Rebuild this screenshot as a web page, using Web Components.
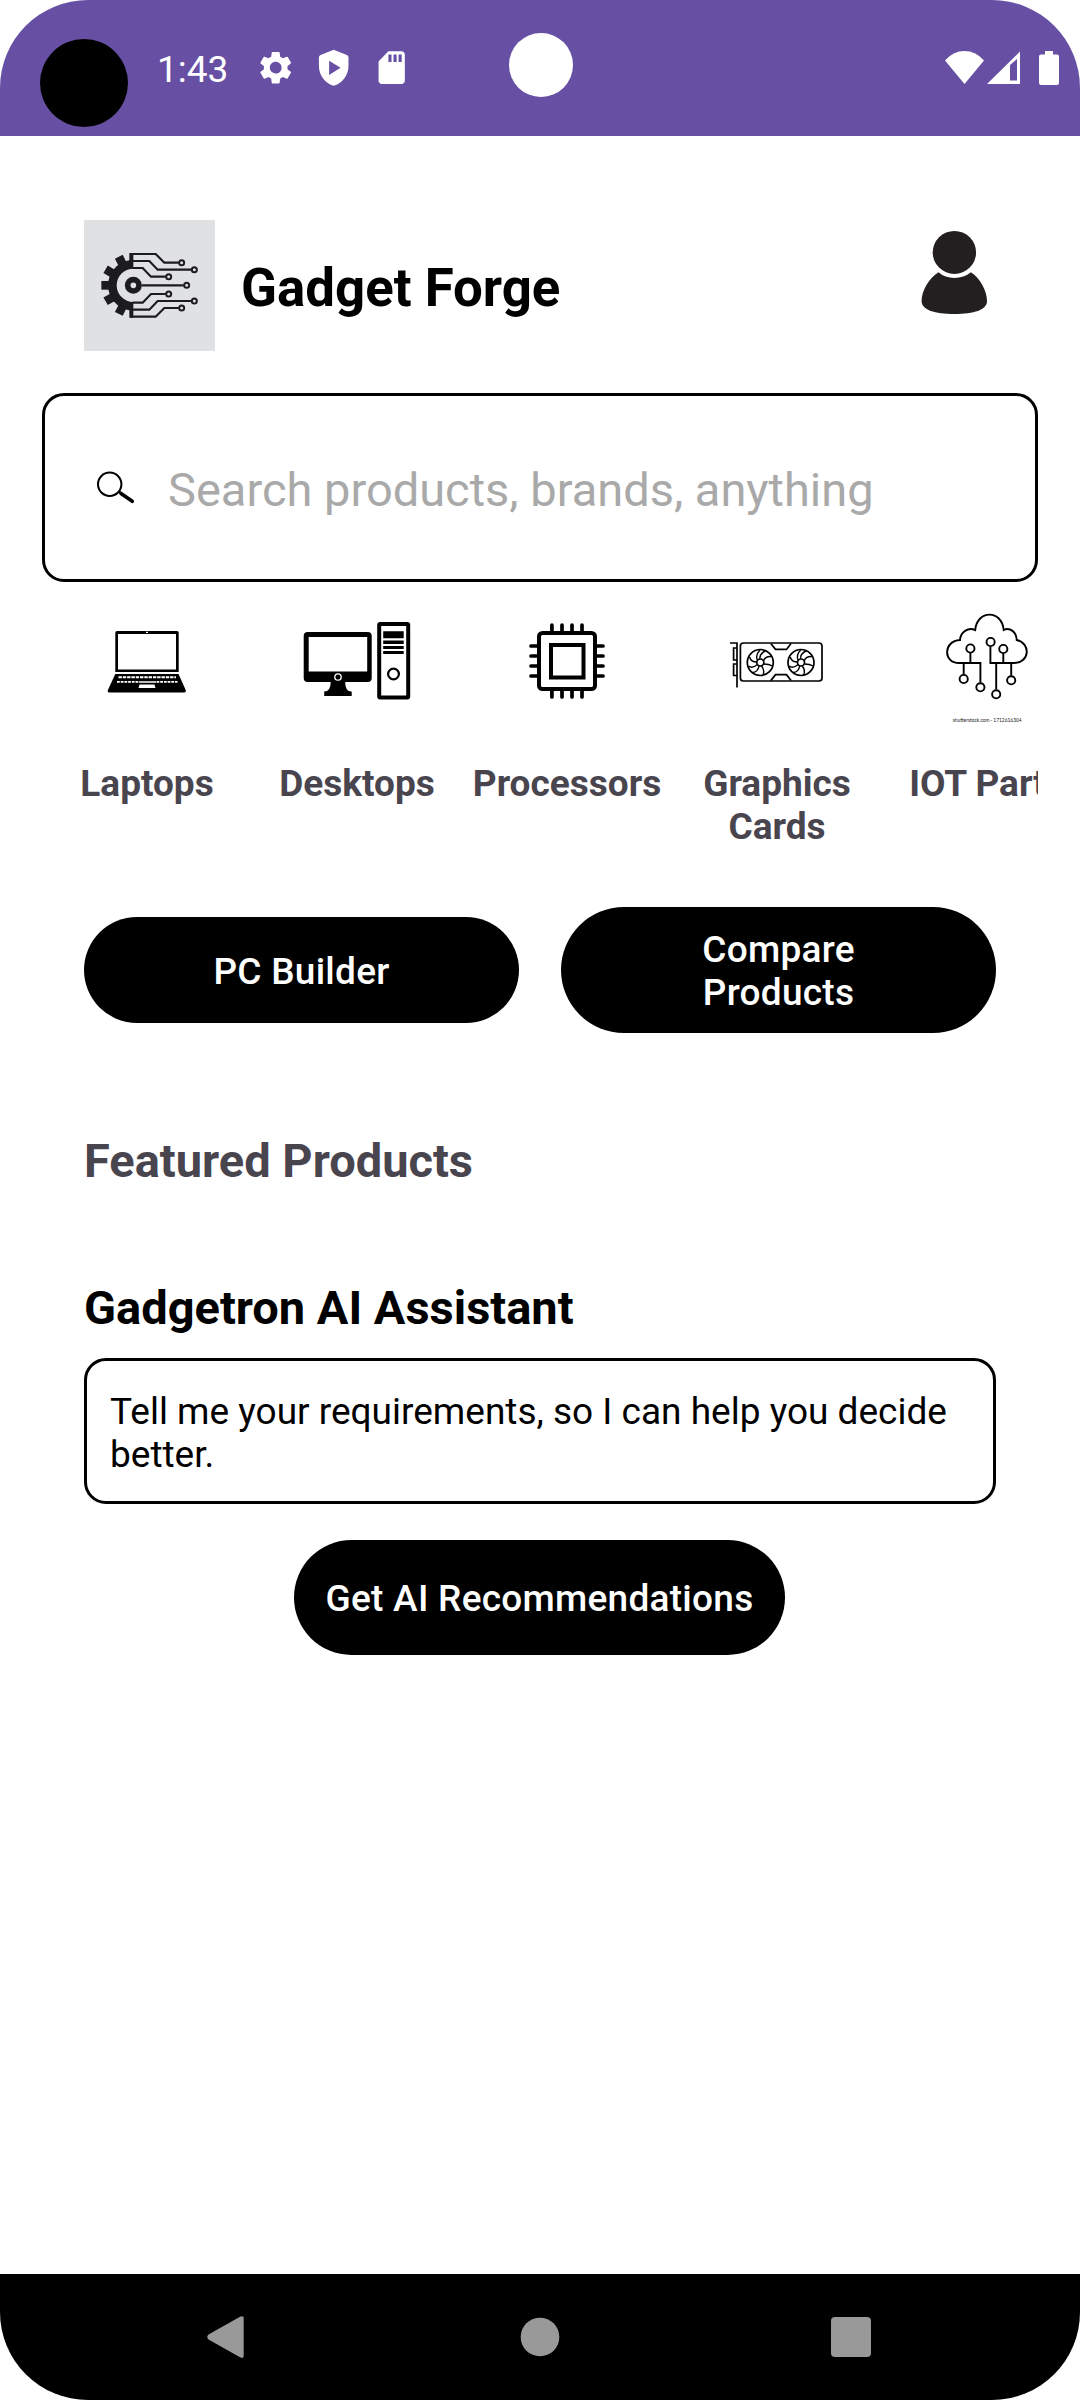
<!DOCTYPE html>
<html lang="en">
<head>
<meta charset="utf-8">
<title>Gadget Forge</title>
<style>
html,body{margin:0;padding:0;background:#fff}
body{width:1080px;height:2400px;overflow:hidden;font-family:Roboto,"Liberation Sans",sans-serif;color:#000}
</style>
</head>
<body>
<gf-app></gf-app>
<script>
const define = (name, css, html) => customElements.define(name, class extends HTMLElement {
  constructor() {
    super();
    this.attachShadow({ mode: 'open' }).innerHTML = `<style>*{box-sizing:border-box}svg{display:block}${css}</style>${html}`;
  }
});

define('gf-status-bar', `
:host{display:flex;align-items:flex-start;position:relative;height:136px;background:#6750a4;color:#fff;padding-left:40px;box-sizing:border-box}
.dot{width:88px;height:88px;border-radius:50%;background:#000;margin-top:39px}
.time{width:99px;margin:48px 0 0 29px;font-size:37px;line-height:43px}
.icons{display:flex;gap:18.6px;margin-top:48.3px}
.right{margin:48px 17px 0 auto}
.cam{position:absolute;left:508.500px;top:33px;width:64px;height:64px;border-radius:50%;background:#fff}
`, `
<div class="dot"></div><div class="time">1:43</div>
<div class="icons">
<svg width="39.4" height="39.4" viewBox="0 0 24 24" fill="#fff"><path d="M19.14 12.94c.04-.3.06-.61.06-.94 0-.32-.02-.64-.07-.94l2.03-1.58a.49.49 0 0 0 .12-.61l-1.92-3.32a.488.488 0 0 0-.59-.22l-2.39.96c-.5-.38-1.03-.7-1.62-.94l-.36-2.54a.484.484 0 0 0-.48-.41h-3.84c-.24 0-.43.17-.47.41l-.36 2.54c-.59.24-1.13.57-1.62.94l-2.39-.96c-.22-.08-.47 0-.59.22L2.74 8.87c-.12.21-.08.47.12.61l2.03 1.58c-.05.3-.09.63-.09.94s.02.64.07.94l-2.03 1.58a.49.49 0 0 0-.12.61l1.92 3.32c.12.22.37.29.59.22l2.39-.96c.5.38 1.03.7 1.62.94l.36 2.54c.05.24.24.41.48.41h3.84c.24 0 .44-.17.47-.41l.36-2.54c.59-.24 1.13-.56 1.62-.94l2.39.96c.22.08.47 0 .59-.22l1.92-3.32c.12-.22.07-.47-.12-.61l-2.01-1.58zM12 15.6A3.61 3.61 0 0 1 8.400 12c0-1.980 1.620-3.600 3.600-3.600s3.600 1.620 3.600 3.600-1.620 3.600-3.600 3.600z"/></svg>
<svg width="39.4" height="39.4" viewBox="0 0 24 24" fill="#fff" fill-rule="evenodd"><path d="M12 1 4 4.200Q3 4.600 3 5.600V11c0 5.550 3.840 10.740 9 12 5.160-1.260 9-6.450 9-12V5.600Q21 4.600 20 4.200zM9.200 7.700v8.700l7-4.350z"/></svg>
<svg width="39.4" height="39.4" viewBox="0 0 24 24" fill="#fff" fill-rule="evenodd"><path d="M18 2h-8L4 8.200V20c0 1.100.9 2 2 2h12c1.100 0 2-.9 2-2V4c0-1.100-.9-2-2-2zM10 4h1.900v4.500H10zM13.100 4H15v4.500h-1.900zM16.200 4h1.900v4.500h-1.900z"/></svg>
</div>
<svg class="right" width="120" height="40" viewBox="943 48 120 40" fill="#fff"><path d="M945 60.500Q953 51 964.500 51T984 60.500L964.500 84z"/><path fill-rule="evenodd" d="M987 84 1020 51.500V84zM1010 65v15.500h7V59z"/><path d="M1045 51h8v3.500h4q2 0 2 2V83q0 2-2 2h-16q-2 0-2-2V56.500q0-2 2-2h4z"/></svg>
<div class="cam"></div>`);

define('gf-header', `
:host{display:flex;align-items:flex-start;margin-top:84px;padding:0 84px;height:173px;box-sizing:border-box}
h1{font-size:52.8px;line-height:62px;font-weight:700;margin:37px 0 0 26px;white-space:nowrap}
.user{margin:10px 8px 0 auto}
`, `
<svg width="131" height="131" viewBox="42 30 393 393">
<rect x="42" y="30" width="393" height="393" fill="#e0e1e3"/>
<g fill="#1c1b1d"><path fill-rule="evenodd" d="M190 129V176A50 50 0 0 0 190 276V323H178V301A76 76 0 0 1 178 151V129z"/>
<path d="M94 213h26v26H94z"/><path d="M94 213h26v26H94z" transform="rotate(30 190 226)"/><path d="M94 213h26v26H94z" transform="rotate(-30 190 226)"/><path d="M94 213h26v26H94z" transform="rotate(63 190 226)"/><path d="M94 213h26v26H94z" transform="rotate(-63 190 226)"/></g>
<g fill="none" stroke="#1c1b1d" stroke-width="6.500"><circle cx="190" cy="226" r="17" stroke-width="17"/>
<path d="M180 132h77l26 26h43M188 153h50l25 26h101M188 174h30l25 26h44M215 226h126M188 278h30l25-26h44M188 299h50l25-26h101M180 320h77l26-26h43"/>
<g stroke-width="6"><circle cx="335" cy="158" r="7.500"/><circle cx="373" cy="179" r="7.500"/><circle cx="296" cy="200" r="7.500"/><circle cx="350" cy="226" r="7.500"/><circle cx="296" cy="252" r="7.500"/><circle cx="373" cy="273" r="7.500"/><circle cx="335" cy="294" r="7.500"/></g></g>
</svg>
<h1>Gadget Forge</h1>
<svg class="user" width="68" height="86" viewBox="920 230 68 86" fill="#231f20"><ellipse cx="954.400" cy="252.400" rx="21.700" ry="21.500"/><path d="M938.500 272.300Q945 278 954.400 278T971 272.300C980 278 987 291 987 301 987 310 974 314 954.400 314S921.600 310 921.600 301C921.600 291 929 278 938.500 272.300z"/></svg>`);

define('gf-search', `
:host{display:flex;align-items:center;margin:0 42px;height:189px;border:3px solid #000;border-radius:22px;box-sizing:border-box;padding-left:50px}
span{font-size:47px;line-height:56px;color:#a9a9a9;margin:5px 0 0 32px;white-space:nowrap}
`, `<svg width="41" height="35" viewBox="95 470 41 35" fill="none" stroke="#000"><circle cx="109.700" cy="484.300" r="11.700" stroke-width="2"/><path d="M118.500 491.500 123 494.500" stroke-width="2.500"/><path d="M121 493.500 132.300 501.300" stroke-width="3.600" stroke-linecap="round"/></svg>
<span><slot></slot></span>`);

define('gf-category', `
:host{display:block;flex:0 0 210px;width:210px;text-align:center}
::slotted(svg){display:block;width:210px;height:150px}
.l{margin-top:12px;font-size:37px;line-height:43px;font-weight:700;color:#49454f;padding:0 8px}
`, `<slot name="icon"></slot><div class="l"><slot></slot></div>`);

define('gf-categories', `
:host{display:flex;margin:18px 42px 0;height:260px;overflow:hidden}
.n{white-space:nowrap}
`, `
<gf-category><svg slot="icon" viewBox="42 600 210 150"><g fill="#000"><path fill-rule="evenodd" d="M117 631h60q1.700 0 1.700 1.700V672H115.300v-39.300q0-1.700 1.700-1.700zM118 634v35.500h58V634z"/><path d="M115.300 674h63.200l7.200 16q.5 2.500-1.500 2.500h-75q-2 0-1.300-2.500z"/></g><g stroke="#fff" fill="none"><path stroke-width="2" stroke-dasharray="3.400 .9" d="M118.500 677.300h57.500"/><path stroke-width="1.800" stroke-dasharray="2.800 .9" d="M117 681.800h22M156.500 681.800h21"/><path stroke-width="1.500" d="M139 682h17"/></g><path fill="#fff" d="M139.500 684.500h15l1 3.500h-17zM146 631.800h2v1.300h-2z"/></svg>Laptops</gf-category>
<gf-category><svg slot="icon" viewBox="251.300 600 210 150"><path fill-rule="evenodd" d="M307 632h60q4 0 4 4v42q0 4-4 4h-22.500q0 10 6.500 9.500v4.500h-27.500v-4.500q6.500 0 6.500-9.500H307q-4 0-4-4v-42q0-4 4-4zM308 637v34.500h58.500V637z"/><circle cx="337.300" cy="677" r="3.200" stroke="#fff" stroke-width="1.300"/><rect x="378.500" y="624" width="29" height="73.500" rx="1" fill="none" stroke="#000" stroke-width="4"/><path d="M382.500 631.300H403v6.900h-20.500zM382.500 640.500H403v3.400h-20.500zM382.500 646H403v3h-20.500zM382.500 651H403v3h-20.500z"/><circle cx="392.800" cy="674" r="5.400" fill="none" stroke="#000" stroke-width="2.200"/></svg>Desktops</gf-category>
<gf-category class="n"><svg slot="icon" viewBox="462 600 210 150" fill="none" stroke="#000" stroke-width="3.700" stroke-linecap="round"><rect x="539" y="633" width="56" height="56" rx="3.500" stroke-width="4"/><rect x="551" y="645" width="32.500" height="32.500" stroke-width="4"/><path d="M551.900 625v6M562 625v6M572 625v6M582 625v6M551.900 691v6M562 691v6M572 691v6M582 691v6M531 646h6M531 656h6M531 666h6M531 676h6M597 646h6M597 656h6M597 666h6M597 676h6"/></svg>Processors</gf-category>
<gf-category><svg slot="icon" viewBox="672 600 210 150" fill="none" stroke="#000" stroke-width="1.700"><rect x="740.400" y="643" width="81.600" height="38" rx="3"/><path d="M730 643h7v44.500M737 648h-3.400v12H737M737 664h-3.400v11.500H737M770.800 643.500l4.700 5.900h11l4.500-5.900M770.800 680.600l4.700-5.900h11l4.500 5.900"/><g><circle cx="760.300" cy="662.500" r="13"/><circle cx="760.300" cy="662.500" r="3.500"/><g stroke-width="1.400"><path d="M757.500 660.500Q755 655 760 650M760 659Q759 654 766 650.500M763.500 661Q765 656 771.500 656.500M763.800 664Q769 664 772.500 666M761.500 666Q765 670 763 675M759 666Q758 672 752.500 672.500M757.500 664.500Q752 669 748.500 666M757 662Q751 662 749.500 657"/></g></g><g transform="translate(40.700 0)"><circle cx="760.300" cy="662.500" r="13"/><circle cx="760.300" cy="662.500" r="3.500"/><g stroke-width="1.400"><path d="M757.500 660.500Q755 655 760 650M760 659Q759 654 766 650.500M763.500 661Q765 656 771.500 656.500M763.800 664Q769 664 772.500 666M761.500 666Q765 670 763 675M759 666Q758 672 752.500 672.500M757.500 664.500Q752 669 748.500 666M757 662Q751 662 749.500 657"/></g></g></svg>Graphics Cards</gf-category>
<gf-category class="n"><svg slot="icon" viewBox="882 600 210 150" fill="none" stroke="#000" stroke-width="1.900"><path d="M980.400 682.500V663H959C943 663 943 641 960 640 960.500 632 968 627 975.200 630 977 609.500 1002 609.500 1003.700 630 1010 627 1016.500 632 1016.700 640 1031 643 1030 663 1014 663H990.400V646.500M970.400 653v10M1003.300 653.500V663M963.700 663v11.500M996.200 663v26.500M1011.200 663v12.500"/><circle cx="980.400" cy="687.300" r="4.100"/><circle cx="990.600" cy="642" r="4.100"/><circle cx="970.400" cy="648.500" r="4.100"/><circle cx="1003.300" cy="649" r="4.100"/><circle cx="963.700" cy="679" r="4.100"/><circle cx="996.200" cy="694.300" r="4.100"/><circle cx="1011.200" cy="680.300" r="4.100"/><text x="952.700" y="721.700" font-size="5.300" fill="#222" stroke="none" textLength="69" lengthAdjust="spacingAndGlyphs" font-family="Lato, sans-serif">shutterstock.com · 1712616304</text></svg>IOT Parts</gf-category>`);

define('gf-button', `
:host{display:flex;align-items:center;justify-content:center;background:#000;color:#fff;font-size:37px;line-height:43px;font-weight:500;letter-spacing:.26px;text-align:center;border-radius:63px;box-sizing:border-box}
span{margin-top:2px}
`, `<span><slot></slot></span>`);

define('gf-actions', `
:host{display:flex;align-items:center;gap:42px;margin:47px 84px 0;height:126px}
gf-button{flex:none;width:435px;height:106px;padding:0 63px}
.tall{height:126px;padding:0 120px}
`, `<gf-button>PC Builder</gf-button><gf-button class="tall">Compare Products</gf-button>`);

define('gf-assistant', `
:host{display:flex;flex-direction:column;padding:0 84px}
h2{margin:100px 0 0;font-size:47px;line-height:56px;font-weight:700;color:#49454f}
h2+h2{margin-top:91px;color:#000}
.box{margin-top:22px;height:146px;border:3px solid #000;border-radius:22px;padding:29px 20px 0 23px;font-size:37px;line-height:43px}
gf-button{margin:36px 0 0 210px;width:491px;height:115px;white-space:nowrap}
`, `<h2>Featured Products</h2><h2>Gadgetron AI Assistant</h2>
<div class="box">Tell me your requirements, so I can help you decide better.</div>
<gf-button>Get AI Recommendations</gf-button>`);

define('gf-nav-bar', `
:host{display:flex;justify-content:space-between;align-items:center;height:126px;background:#000;padding:0 207px;margin-top:auto;box-sizing:border-box}
`, `
<svg width="42" height="44" viewBox="207 2315 42 44" fill="#999"><path d="M208.500 2334.500 240 2316.800Q243.700 2315 243.700 2318V2356Q243.700 2359 240 2357.200L208.500 2339.500Q206 2337 208.500 2334.500z"/></svg>
<svg width="40" height="40" viewBox="0 0 40 40" fill="#999"><circle cx="20" cy="20" r="19.300"/></svg>
<svg width="42" height="40" viewBox="0 0 42 40" fill="#999"><rect x="0" width="40" height="40" rx="4"/></svg>`);

define('gf-app', `
:host{display:flex;flex-direction:column;width:1080px;height:2400px;border-radius:88px;overflow:hidden;background:#fff}
`, `<gf-status-bar></gf-status-bar><gf-header></gf-header>
<gf-search>Search products, brands, anything</gf-search>
<gf-categories></gf-categories><gf-actions></gf-actions><gf-assistant></gf-assistant><gf-nav-bar></gf-nav-bar>`);
</script>
</body>
</html>
